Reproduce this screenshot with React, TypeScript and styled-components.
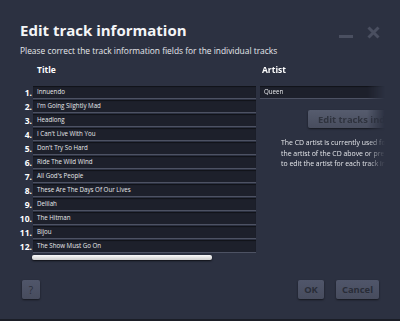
import React from 'react';
import styled, { createGlobalStyle } from 'styled-components';

const tracks = [
  'Innuendo',
  "I'm Going Slightly Mad",
  'Headlong',
  "I Can't Live With You",
  "Don't Try So Hard",
  'Ride The Wild Wind',
  "All God's People",
  'These Are The Days Of Our Lives',
  'Delilah',
  'The Hitman',
  'Bijou',
  'The Show Must Go On',
];

function App() {
  return (
    <>
      <GlobalStyle />
      <Window>
        <Header>
          <TitleRow>
            <Heading>Edit track information</Heading>
            <Controls>
              <svg width="14" height="13" viewBox="0 0 14 13">
                <rect x="0" y="9" width="14" height="3" fill="#4a4f60" />
              </svg>
              <svg width="13" height="13" viewBox="0 0 13 13">
                <path d="M1.5 1.5 L11.5 11.5 M11.5 1.5 L1.5 11.5" stroke="#4a4f60" strokeWidth="3" />
              </svg>
            </Controls>
          </TitleRow>
          <Subtitle>Please correct the track information fields for the individual tracks</Subtitle>
        </Header>
        <Body>
          <LeftCol>
            <ColHeader indent={37}>Title</ColHeader>
            <Rows>
              {tracks.map((t, i) => (
                <Row key={t}>
                  <Num>{i + 1}.</Num>
                  <Field>{t}</Field>
                </Row>
              ))}
            </Rows>
            <Thumb />
          </LeftCol>
          <RightCol>
            <ColHeader indent={3}>Artist</ColHeader>
            <Rows>
              <Row>
                <Field>Queen</Field>
              </Row>
            </Rows>
            <EditButton>Edit tracks individually</EditButton>
            <Note>
              The CD artist is currently used for all tracks. Either change
              <br />
              the artist of the CD above or press "Edit tracks individually"
              <br />
              to edit the artist for each track individually.
            </Note>
          </RightCol>
        </Body>
        <Footer>
          <SmallButton width={18} light>?</SmallButton>
          <ButtonGroup>
            <SmallButton width={26}>OK</SmallButton>
            <SmallButton width={43}>Cancel</SmallButton>
          </ButtonGroup>
        </Footer>
      </Window>
    </>
  );
}

export default App;

const GlobalStyle = createGlobalStyle`
  html, body {
    margin: 0;
    padding: 0;
    background: #2c3141;
  }
  * {
    box-sizing: border-box;
  }
`;

const Window = styled.div`
  width: 400px;
  height: 321px;
  display: flex;
  flex-direction: column;
  overflow: hidden;
  background: #2c3141;
  border-bottom: 2px solid #1b1e27;
  font-family: 'Open Sans', 'Liberation Sans', sans-serif;
  color: #fff;
`;

const Header = styled.div`
  padding: 19px 20px 0 20px;
`;

const TitleRow = styled.div`
  display: flex;
  justify-content: space-between;
  align-items: flex-start;
`;

const Heading = styled.h1`
  margin: 0;
  font-size: 15px;
  font-weight: 700;
  line-height: 22px;
  color: #f4f5f7;
`;

const Controls = styled.div`
  display: flex;
  align-items: flex-start;
  gap: 14px;
  margin-top: 7px;
`;

const Subtitle = styled.p`
  margin: 4px 0 0;
  font-size: 8.4px;
  line-height: 11px;
  color: #e6e8ec;
`;

const Body = styled.div`
  display: flex;
  margin-top: 8px;
`;

const LeftCol = styled.div`
  width: 256px;
  flex: none;
`;

const RightCol = styled.div`
  flex: 1;
  min-width: 0;
  margin-left: 3px;
  overflow: hidden;
  mask-image: linear-gradient(to right, #000 108px, transparent 126px);
`;

const ColHeader = styled.div<{ indent: number }>`
  padding-left: ${(p) => p.indent}px;
  font-size: 8.5px;
  font-weight: 700;
  line-height: 11px;
`;

const Rows = styled.div`
  margin-top: 11px;
`;

const Row = styled.div`
  display: flex;
  align-items: center;
  height: 13px;
  margin-bottom: 1px;
`;

const Num = styled.div`
  width: 32px;
  text-align: right;
  font-size: 8.5px;
  font-weight: 700;
  line-height: 13px;
`;

const Field = styled.div`
  flex: 1;
  height: 13px;
  margin-left: 1px;
  padding-left: 4px;
  background: #1d202b;
  border-bottom: 1px solid #4d5263;
  box-shadow: inset 0 1px 1px rgba(0, 0, 0, 0.45);
  font-size: 6.2px;
  line-height: 12px;
  color: #e8e9ec;
  white-space: nowrap;
  overflow: hidden;
`;

const Thumb = styled.div`
  width: 180px;
  height: 5px;
  margin: 2px 0 0 32px;
  border-radius: 2px;
  background: linear-gradient(#fbfbfb, #cdcdcd);
  box-shadow: 0 1px 2px rgba(0, 0, 0, 0.7);
`;

const EditButton = styled.button`
  display: block;
  height: 18px;
  margin: 11px 0 0 49px;
  padding: 0 10px;
  border: none;
  border-radius: 2px;
  background: linear-gradient(#565c6e, #484d5e);
  box-shadow: 0 1px 2px rgba(0, 0, 0, 0.55);
  font-family: inherit;
  font-size: 9.4px;
  font-weight: 700;
  color: #2f333e;
  white-space: nowrap;
`;

const Note = styled.p`
  margin: 10px 0 0 22px;
  font-size: 6.9px;
  line-height: 10.5px;
  color: #e4e6ea;
  white-space: nowrap;
`;

const Footer = styled.div`
  margin-top: auto;
  display: flex;
  justify-content: space-between;
  padding: 0 21px 20px 22px;
`;

const ButtonGroup = styled.div`
  display: flex;
  gap: 12px;
`;

const SmallButton = styled.button<{ width: number; light?: boolean }>`
  width: ${(p) => p.width}px;
  height: 19px;
  padding: 0;
  border: none;
  border-radius: 2px;
  background: linear-gradient(#50566a, #474c5e);
  box-shadow: 0 1px 2px rgba(0, 0, 0, 0.55);
  font-family: inherit;
  font-size: ${(p) => (p.light ? '10px' : '9.4px')};
  font-weight: ${(p) => (p.light ? 400 : 700)};
  color: #292d38;
`;
